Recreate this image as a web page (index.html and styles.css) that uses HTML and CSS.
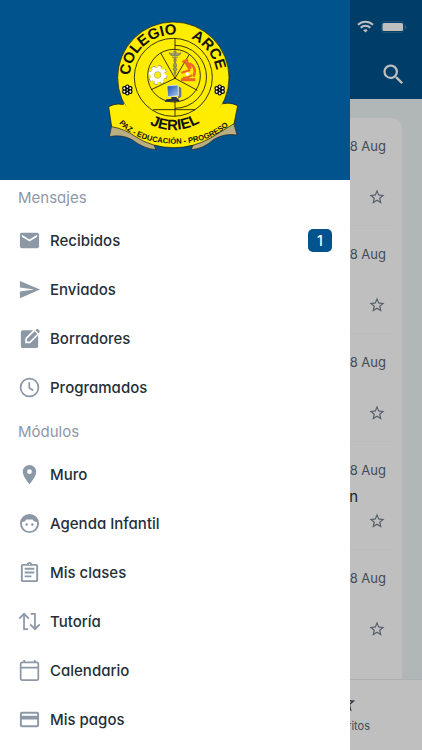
FILE: index.html
```html
<!DOCTYPE html>
<html lang="es">

<head>
    <meta charset="UTF-8">
    <meta name="viewport" content="width=device-width, initial-scale=1.0">
    <title>Colegio Arce Jeriel</title>
    <link rel="stylesheet" href="styles.css">
</head>

<body>
    <!-- shapes used more than once -->
    <svg class="defs" aria-hidden="true">
        <symbol id="star" viewBox="0 0 24 24">
            <path d="M22 9.24l-7.19-.62L12 2 9.19 8.63 2 9.24l5.46 4.73L5.82 21 12 17.27 18.18 21l-1.63-7.03L22 9.24zM12 15.4l-3.76 2.27 1-4.28-3.32-2.88 4.38-.38L12 6.1l1.71 4.04 4.38.38-3.32 2.88 1 4.28L12 15.4z"/>
        </symbol>
    </svg>

    <div class="inbox">
        <header class="topbar">
            <div class="status">
                <svg class="wifi" viewBox="0 0 17 13" fill="none" stroke="#fff" stroke-width="2.2">
                    <path d="M1 4.8a10.8 10.8 0 0 1 15 0M3.7 7.7a6.9 6.9 0 0 1 9.6 0"/>
                    <path d="M8.5 12.6l-2.3-2.3a3.3 3.3 0 0 1 4.6 0z" fill="#fff" stroke="none"/>
                </svg>
                <svg class="battery" viewBox="0 0 26 12">
                    <rect x=".5" y=".5" width="22.5" height="11" rx="3" fill="none" stroke="#fff" stroke-opacity=".15"/>
                    <rect x="1.5" y="2" width="20.5" height="8" rx="1.5" fill="#fff"/>
                    <path d="M24.3 4v4c1.5-.8 1.5-3.2 0-4z" fill="#fff" fill-opacity=".4"/>
                </svg>
            </div>
            <button class="search" aria-label="Buscar">
                <svg viewBox="0 0 24 24" fill="#fff">
                    <path d="M15.5 14h-.79l-.28-.27A6.471 6.471 0 0 0 16 9.5 6.5 6.5 0 1 0 9.5 16c1.61 0 3.09-.59 4.23-1.57l.27.28v.79l5 4.99L20.49 19l-4.99-5zm-6 0C7.01 14 5 11.99 5 9.5S7.01 5 9.5 5 14 7.01 14 9.5 11.99 14 9.5 14z"/>
                </svg>
            </button>
        </header>

        <main class="content">
            <ul class="messages">
                <li class="message">
                    <time class="date">8 Aug</time>
                    <p class="subject"></p>
                    <button class="fav" aria-label="Favorito"><svg><use href="#star"/></svg></button>
                </li>
                <li class="message">
                    <time class="date">8 Aug</time>
                    <p class="subject"></p>
                    <button class="fav" aria-label="Favorito"><svg><use href="#star"/></svg></button>
                </li>
                <li class="message">
                    <time class="date">8 Aug</time>
                    <p class="subject"></p>
                    <button class="fav" aria-label="Favorito"><svg><use href="#star"/></svg></button>
                </li>
                <li class="message">
                    <time class="date">8 Aug</time>
                    <p class="subject">n</p>
                    <button class="fav" aria-label="Favorito"><svg><use href="#star"/></svg></button>
                </li>
                <li class="message">
                    <time class="date">8 Aug</time>
                    <p class="subject"></p>
                    <button class="fav" aria-label="Favorito"><svg><use href="#star"/></svg></button>
                </li>
            </ul>
        </main>

        <nav class="tabs">
            <a class="tab" href="#favoritos">
                <svg><use href="#star"/></svg>
                Favoritos
            </a>
        </nav>
    </div>

    <div class="scrim"></div>

    <aside class="drawer">
        <div class="brand">
            <svg class="crest" viewBox="0 0 450 435" role="img" aria-label="Colegio Arce Jeriel">
                <defs>
                    <path id="arc-top" d="M89 190A131 131 0 0 1 351 190"/>
                    <path id="arc-bottom" d="M63 188A157 157 0 0 0 377 188"/>
                    <path id="arc-ribbon" d="M44 308C106 408 324 414 400 316"/>
                    <linearGradient id="screen" x2="1" y2="1">
                        <stop stop-color="#1747a8"/>
                        <stop offset="1" stop-color="#a9cdf5"/>
                    </linearGradient>
                    <g id="flower" fill="#fff" stroke="#000" stroke-width="3.5">
                        <circle cy="-10" r="5"/>
                        <circle cx="9" cy="-5" r="5"/>
                        <circle cx="9" cy="5" r="5"/>
                        <circle cy="10" r="5"/>
                        <circle cx="-9" cy="5" r="5"/>
                        <circle cx="-9" cy="-5" r="5"/>
                        <circle r="4"/>
                    </g>
                </defs>
                <!-- ribbon tails -->
                <g fill="#b9ad82" stroke="#222" stroke-width="2">
                    <path d="M35 305L35 332L28 365Q65 357 96 374Q133 402 168 404L158 380Z"/>
                    <path d="M406 300L402 328L411 360Q373 354 342 373Q308 403 273 404L285 378Z"/>
                </g>
                <!-- ribbon and seal -->
                <path d="M26 275Q55 260 82 274Q120 330 220 340Q320 330 358 270Q386 258 413 272L402 326Q360 352 330 370Q280 398 222 398Q155 398 105 364Q75 342 35 335Z" fill="#ffed00" stroke="#111" stroke-width="2"/>
                <circle cx="220" cy="188" r="167" fill="#ffed00" stroke="#111" stroke-width="2"/>
                <path d="M72 265Q126 345 220 349Q318 344 367 265L380 302Q320 366 220 370Q120 365 60 302Z" fill="#ffed00"/>
                <g fill="none" stroke="#111" stroke-width="2.5">
                    <circle cx="220" cy="187" r="117"/>
                    <circle cx="222" cy="182" r="79"/>
                    <path d="M225 70V103M225 91A94 94 0 0 1 225 280M225 258V304M160 284H285"/>
                    <path d="M225 190L182 114M225 190L268 118M225 190L154 224M225 190L292 226"/>
                </g>
                <!-- gear -->
                <g transform="translate(173 180)">
                    <circle r="23" fill="none" stroke="#777" stroke-width="12" stroke-dasharray="10 8.06"/>
                    <circle r="23" fill="none" stroke="#fff" stroke-width="9" stroke-dasharray="9 9.06"/>
                    <circle r="16" fill="none" stroke="#fff" stroke-width="12"/>
                    <circle r="10" fill="#ffed00" stroke="#aaa" stroke-width="2"/>
                </g>
                <!-- caduceus -->
                <g fill="none" stroke="#8d8956" stroke-width="4">
                    <path d="M225 112V184"/>
                    <path d="M207 113Q217 128 225 118Q233 128 243 113" fill="#a5a06a"/>
                    <path d="M217 126C246 137 207 148 226 158C239 166 216 169 225 177M233 126C204 137 243 148 224 158C211 166 234 169 225 177"/>
                    <circle cx="225" cy="111" r="3"/>
                </g>
                <!-- microscope -->
                <g fill="none" stroke="#ec6526">
                    <path d="M247 141L264 134" stroke-width="7"/>
                    <path d="M258 140L271 162" stroke-width="12"/>
                    <path d="M268 145Q292 157 281 185" stroke-width="7"/>
                    <path d="M244 173L271 165" stroke-width="6"/>
                    <path d="M243 194H286" stroke-width="9"/>
                    <path d="M249 187Q264 190 277 180" stroke-width="5"/>
                </g>
                <circle cx="262" cy="177" r="5" fill="#fff"/>
                <!-- computer -->
                <path d="M236 214L244 219V245L234 251Z" fill="#66747d"/>
                <path d="M201 213L234 210L236 242L203 245Z" fill="url(#screen)" stroke="#e4eefa" stroke-width="2"/>
                <path d="M214 246H230V251H214ZM199 253L233 250L239 258L194 261Z" fill="#273346"/>
                <use href="#flower" x="82" y="225"/>
                <use href="#flower" x="359" y="225"/>
                <g class="crest-text">
                    <text><textPath href="#arc-top" startOffset="8">COLEGIO</textPath></text>
                    <text><textPath href="#arc-top" startOffset="260">ARCE</textPath></text>
                    <text text-anchor="middle"><textPath href="#arc-bottom" startOffset="51%">JERIEL</textPath></text>
                    <text class="motto" text-anchor="middle"><textPath href="#arc-ribbon" startOffset="50%">PAZ - EDUCACIÓN - PROGRESO</textPath></text>
                </g>
            </svg>
        </div>

        <nav class="menu">
            <h2 class="menu-title">Mensajes</h2>
            <ul class="menu-list">
                <li>
                    <a class="menu-item" href="#recibidos">
                        <svg class="icon" viewBox="0 0 24 24"><path d="M20 4H4c-1.1 0-1.99.9-1.99 2L2 18c0 1.1.9 2 2 2h16c1.1 0 2-.9 2-2V6c0-1.1-.9-2-2-2zm0 4l-8 5-8-5V6l8 5 8-5v2z"/></svg>
                        Recibidos
                        <span class="badge">1</span>
                    </a>
                </li>
                <li>
                    <a class="menu-item" href="#enviados">
                        <svg class="icon" viewBox="0 0 24 24"><path d="M2.01 21L23 12 2.01 3 2 10l15 2-15 2z"/></svg>
                        Enviados
                    </a>
                </li>
                <li>
                    <a class="menu-item" href="#borradores">
                        <svg class="icon" viewBox="0 0 24 24">
                            <path d="M5 3.5h10.8L7.5 11.8V17h5.2l8.3-8.3V20c0 1.1-.9 2-2 2H5c-1.1 0-2-.9-2-2V5.500c0-1.1.9-2 2-2z"/>
                            <path d="M9.3 15.2v-2.8l8-8 2.8 2.8-8 8zM18.3 3.4l1-1c.5-.5 1.2-.5 1.7 0l1.3 1.3c.5.5.5 1.2 0 1.7l-1 1z"/>
                        </svg>
                        Borradores
                    </a>
                </li>
                <li>
                    <a class="menu-item" href="#programados">
                        <svg class="icon line" viewBox="0 0 24 24"><circle cx="12" cy="12" r="9.3"/><path d="M11.8 6.500v6l4.200 2.700"/></svg>
                        Programados
                    </a>
                </li>
            </ul>

            <h2 class="menu-title">Módulos</h2>
            <ul class="menu-list">
                <li>
                    <a class="menu-item" href="#muro">
                        <svg class="icon" viewBox="0 0 24 24"><path d="M12 2C8.13 2 5 5.13 5 9c0 5.25 7 13 7 13s7-7.75 7-13c0-3.87-3.13-7-7-7zm0 9.5a2.5 2.5 0 0 1 0-5 2.5 2.5 0 0 1 0 5z"/></svg>
                        Muro
                    </a>
                </li>
                <li>
                    <a class="menu-item" href="#agenda">
                        <svg class="icon" viewBox="0 0 24 24">
                            <path fill-rule="evenodd" d="M12 2a10 10 0 1 0 0 20 10 10 0 0 0 0-20zM4.5 10.5C6.500 10.2 8 9 8.700 7.700h6.600c.7 1.300 2.200 2.500 4.200 2.800.3.500.5 1 .5 1.500a8 8 0 0 1-16 0c0-.5.2-1 .5-1.500z"/>
                            <circle cx="9" cy="13" r="1.3"/>
                            <circle cx="15" cy="13" r="1.3"/>
                        </svg>
                        Agenda Infantil
                    </a>
                </li>
                <li>
                    <a class="menu-item" href="#clases">
                        <svg class="icon" viewBox="0 0 24 24"><path d="M7 15h7v2H7zm0-4h10v2H7zm0-4h10v2H7zm12-4h-4.18C14.4 1.84 13.3 1 12 1s-2.4.84-2.82 2H5c-1.1 0-2 .9-2 2v15c0 1.1.9 2 2 2h14c1.1 0 2-.9 2-2V5c0-1.1-.9-2-2-2zm-7-.25c.41 0 .75.34.75.75s-.34.75-.75.75-.75-.34-.75-.75.34-.75.75-.75zM19 20H5V5h14v15z"/></svg>
                        Mis clases
                    </a>
                </li>
                <li>
                    <a class="menu-item" href="#tutoria">
                        <svg class="icon line" viewBox="0 0 24 24"><path d="M10.5 20H6.300V4.500M1.300 9L6.300 4l5 5M13.300 4h4.400v15.500M12.700 15l5 5 5-5"/></svg>
                        Tutoría
                    </a>
                </li>
                <li>
                    <a class="menu-item" href="#calendario">
                        <svg class="icon line" viewBox="0 0 24 24"><rect x="2.8" y="3.5" width="18.4" height="18.5" rx="1.5"/><path d="M3 9h18M6.500 1v2.500M17.500 1v2.500"/></svg>
                        Calendario
                    </a>
                </li>
                <li>
                    <a class="menu-item" href="#pagos">
                        <svg class="icon" viewBox="0 0 24 24"><path d="M20 4H4c-1.11 0-1.99.89-1.99 2L2 18c0 1.11.89 2 2 2h16c1.11 0 2-.89 2-2V6c0-1.11-.89-2-2-2zm0 14H4v-6h16v6zm0-10H4V6h16v2z"/></svg>
                        Mis pagos
                    </a>
                </li>
            </ul>
        </nav>
    </aside>
</body>

</html>
```
FILE: styles.css
```css
* {
    box-sizing: border-box;
}

body {
    margin: 0;
    height: 100vh;
    overflow: hidden;
    position: relative;
    font-family: Inter, "Liberation Sans", sans-serif;
    font-feature-settings: "cv11";
    font-size: 15px;
    color: #252f3a;
}

ul {
    list-style: none;
    margin: 0;
    padding: 0;
}

a {
    color: inherit;
    text-decoration: none;
}

button {
    display: block;
    border: none;
    background: none;
    padding: 0;
    cursor: pointer;
}

svg {
    display: block;
}

.defs {
    display: none;
}

/* Inbox behind the drawer */
.inbox {
    display: flex;
    flex-direction: column;
    height: 100%;
    background-color: #edf3f5;
}

.topbar {
    display: flex;
    flex-direction: column;
    align-items: flex-end;
    gap: 28px;
    height: 99px;
    padding: 20px 15px 0;
    background-color: #00538c;
}

.status {
    display: flex;
    align-items: center;
    gap: 7px;
}

.wifi {
    width: 17px;
    height: 13px;
}

.battery {
    width: 26px;
    height: 12px;
}

.search svg {
    width: 27px;
    height: 27px;
}

.content {
    display: flex;
    flex: 1;
    min-height: 0;
    padding: 19px 20px 0;
}

.messages {
    flex: 1;
    background-color: #fff;
    border-radius: 10px 10px 0 0;
    padding: 0 8px;
}

.message {
    display: flex;
    flex-direction: column;
    align-items: flex-end;
    height: 108px;
    padding: 18px 8px 0;
    border-bottom: 1px solid #f8fafa;
}

.message:last-child {
    border-bottom: none;
}

.date {
    font-size: 13px;
    line-height: 20px;
    color: #5c6673;
}

.subject {
    height: 20px;
    margin: 7px 28px 5px 0;
    line-height: 20px;
}

.fav svg {
    width: 18px;
    height: 18px;
    fill: #737f8f;
}

.tabs {
    display: flex;
    justify-content: flex-end;
    height: 71px;
    padding: 12px 52px 0;
    background-color: #fff;
    border-top: 1px solid #e6ebee;
}

.tab {
    display: flex;
    flex-direction: column;
    align-items: center;
    gap: 4px;
    font-size: 11px;
    line-height: 16px;
    color: #5c6673;
}

.tab svg {
    width: 22px;
    height: 22px;
    fill: #46505e;
}

.scrim {
    position: absolute;
    inset: 0;
    background-color: rgba(0, 0, 0, 0.25);
}

/* Side drawer */
.drawer {
    position: absolute;
    top: 0;
    bottom: 0;
    left: 0;
    width: calc(100% - 72px);
    overflow: hidden;
    background-color: #fff;
}

.brand {
    display: flex;
    justify-content: center;
    padding: 15px 0 20px;
    background-color: #00538c;
}

.crest {
    width: 150px;
    height: 145px;
}

.crest-text {
    font-family: "Liberation Sans", sans-serif;
    font-size: 45px;
    font-weight: bold;
    fill: #111;
}

.motto {
    font-size: 23px;
}

.menu-title {
    margin: 0;
    padding: 0 18px;
    font-size: 15px;
    font-weight: 400;
    line-height: 36px;
    color: #8d98a7;
}

.menu-list {
    padding-bottom: 2px;
}

.menu-item {
    display: flex;
    align-items: center;
    gap: 9px;
    height: 49px;
    padding: 0 18px;
    font-weight: 500;
}

.icon {
    width: 23px;
    height: 23px;
    fill: #8c98a6;
}

.icon.line {
    fill: none;
    stroke: #8c98a6;
    stroke-width: 1.8;
}

.badge {
    margin-left: auto;
    width: 24px;
    border-radius: 5px;
    font-size: 14px;
    line-height: 23px;
    text-align: center;
    color: #fff;
    background-color: #00538c;
}
```
